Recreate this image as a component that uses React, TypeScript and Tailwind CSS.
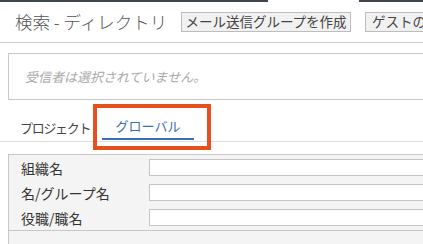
export default function App() {
  const fields = ["組織名", "名/グループ名", "役職/職名"];
  return (
    <div
      className="relative w-[423px] h-[244px] overflow-hidden bg-white text-[#333]"
      style={{ fontFamily: '"Noto Sans CJK JP", "Noto Sans", sans-serif' }}
    >
      <div className="w-[460px]">
        {/* dark strip from the page behind */}
        <div className="flex h-[2px]">
          <div className="w-[268px] bg-[#3f4652]" />
          <div className="w-[91px]" />
          <div className="flex-1 bg-[#3f4652]" />
        </div>

        {/* header */}
        <div className="flex items-center h-[41px] border-b border-[#cfcfcf] pl-[15px]">
          <h1 className="w-[148px] text-[17.5px] font-light text-[#555] leading-none whitespace-nowrap">
            検索 - ディレクトリ
          </h1>
          <button className="ml-[18px] h-[20px] w-[181px] bg-[#f1f1f1] border border-[#bdbdbd] text-[13.5px] leading-none text-[#444] whitespace-nowrap">
            メール送信グループを作成
          </button>
          <button className="ml-[14px] h-[20px] px-[6px] bg-[#f1f1f1] border border-[#bdbdbd] text-[13.5px] leading-none text-[#444] whitespace-nowrap">
            ゲストの追加
          </button>
        </div>

        {/* recipients */}
        <div className="ml-[8px] mt-[10px] h-[47px] border border-[#c8c8c8] flex items-center pl-[16px]">
          <span className="text-[13px] italic text-[#aaa]">受信者は選択されていません。</span>
        </div>

        {/* tabs */}
        <div className="flex items-end h-[42px] border-b border-[#dedede] pl-[20px]">
          <div className="w-[82px] pb-[7px] text-[13px] text-[#444] leading-none tracking-[-1.3px] whitespace-nowrap">
            プロジェクト
          </div>
          <div className="w-[92px] flex flex-col items-center">
            <span className="text-[13px] text-[#3a6eb0] leading-none">グローバル</span>
            <div className="mt-[6px] h-[2px] w-full bg-[#3a6eb0]" />
            <div className="h-[1px]" />
          </div>
        </div>

        {/* search form */}
        <div className="ml-[8px] mt-[12px] bg-[#f4f4f4] border-t border-l border-[#c8c8c8]">
          <div className="flex flex-col gap-[8px] pt-[4px] pb-[4px] border-b border-[#c8c8c8]">
            {fields.map((f) => (
              <div key={f} className="flex items-center h-[17px]">
                <span className="w-[140px] pl-[12px] text-[14px] leading-none text-[#333] whitespace-nowrap">
                  {f}
                </span>
                <div className="flex-1 h-[17px] bg-white border border-[#c4c4c4]" />
              </div>
            ))}
          </div>
          <div className="h-[20px]" />
        </div>
      </div>

      {/* highlight */}
      <div className="absolute left-[93px] top-[104px] w-[118px] h-[46px] border-[4px] border-[#e6501e]" />
    </div>
  );
}
